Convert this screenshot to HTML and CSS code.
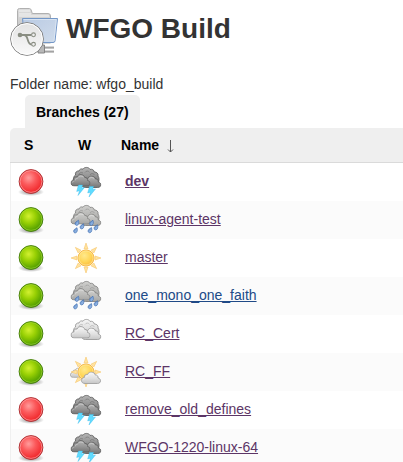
FILE: index.html
```html
<!DOCTYPE html>
<html lang="en">
<head>
<meta charset="utf-8">
<title>WFGO Build</title>
<link rel="stylesheet" href="styles.css">
</head>
<body>
<svg class="defs" aria-hidden="true">
  <defs>
    <radialGradient id="g-red" cx=".4" cy=".35" r=".65"><stop offset="0" stop-color="#ff9c9c"/><stop offset=".45" stop-color="#fb5a5c"/><stop offset="1" stop-color="#f02428"/></radialGradient>
    <radialGradient id="g-green" cx=".4" cy=".36" r=".65"><stop offset="0" stop-color="#d2f030"/><stop offset=".45" stop-color="#98d004"/><stop offset="1" stop-color="#4b9a00"/></radialGradient>
    <radialGradient id="g-shadow"><stop offset="0" stop-color="#000" stop-opacity=".5"/><stop offset="1" stop-color="#000" stop-opacity="0"/></radialGradient>
    <radialGradient id="g-sun" cx=".4" cy=".35" r=".65"><stop offset="0" stop-color="#ffe98c"/><stop offset=".6" stop-color="#ffd658"/><stop offset="1" stop-color="#fcbc3c"/></radialGradient>
    <linearGradient id="g-dark" x2="0" y2="1"><stop offset="0" stop-color="#b4b4b4"/><stop offset=".5" stop-color="#989898"/><stop offset="1" stop-color="#757575"/></linearGradient>
    <linearGradient id="g-mid" x2="0" y2="1"><stop offset="0" stop-color="#cfcfcd"/><stop offset=".5" stop-color="#bcbcba"/><stop offset="1" stop-color="#a6a6a4"/></linearGradient>
    <linearGradient id="g-light" x2="0" y2="1"><stop offset="0" stop-color="#f6f6f6"/><stop offset=".55" stop-color="#e0e0e0"/><stop offset="1" stop-color="#c6c6c6"/></linearGradient>
    <linearGradient id="g-blue" x2="1" y2="1"><stop offset="0" stop-color="#b9cae3"/><stop offset="1" stop-color="#d0dceb"/></linearGradient>
    <linearGradient id="g-paper" x2="0" y2="1"><stop offset="0" stop-color="#dcdcdc"/><stop offset="1" stop-color="#b4b4b4"/></linearGradient>
    <linearGradient id="g-disc" x2="0" y2="1"><stop offset="0" stop-color="#e2e2e2"/><stop offset="1" stop-color="#fafafa"/></linearGradient>
    <linearGradient id="g-drop" x2="1" y2="1"><stop offset="0" stop-color="#4f7fc4"/><stop offset="1" stop-color="#b5d1f2"/></linearGradient>

    <symbol id="puff" viewBox="0 0 20 12.5"><path d="M4 12C1.5 12 .5 10.500.5 9C.5 7 1.800 6 3.300 6C3 3.800 4.800 2.500 6.500 3C7.300 1 9 .5 10.500.6C12.500.7 14 2 14.300 3.500C16.200 3.300 17.400 4.800 17 6.500C18.800 6.800 19.500 8 19.500 9.300C19.500 11 18.200 12 16.500 12Z" stroke-width=".9"/><path d="M5 6.300C4.900 4.800 6 4.200 7.100 4.500M8.200 3.200C9 1.800 11.500 1.500 12.900 3.200M2 8.500C2.200 7.500 3 7.200 3.700 7.300" fill="none" stroke="#fff" stroke-opacity=".4" stroke-width=".8"/></symbol>
    <symbol id="cloud" viewBox="0 0 32 32">
      <path d="M3.500 16C3 13 3.500 10 5.500 9C4.800 6.500 6.800 4.600 9 5C9.500 3 11.500 2.500 13 3.200C14.200.8 18.800.8 20 3.400C22 2.800 24.300 4.200 24.300 6C26.700 5.800 28.600 7.800 28 10C29.500 12 29.200 15 28 17Z" stroke-width=".9"/>
      <path d="M9 8.500C9.500 6.500 11.500 6 13 7M15 6.500C16 4.500 18.500 4.700 19.500 6.300M20 9C21 7 23.500 7.200 24.500 9" fill="none" stroke-opacity=".45"/>
      <use href="#puff" x="11" y="9.500" width="20.500" height="12.500"/>
      <use href="#puff" x=".5" y="8" width="20" height="12.500"/>
    </symbol>
    <symbol id="rays" viewBox="0 0 32 32"><g fill="#ffe3a0" stroke="#f7c66c" stroke-width=".6"><path id="ray" d="M14 7L16 1L18 7Z"/><use href="#ray" transform="rotate(45 16 16)"/><use href="#ray" transform="rotate(90 16 16)"/><use href="#ray" transform="rotate(135 16 16)"/><use href="#ray" transform="rotate(180 16 16)"/><use href="#ray" transform="rotate(225 16 16)"/><use href="#ray" transform="rotate(270 16 16)"/><use href="#ray" transform="rotate(315 16 16)"/></g><circle cx="16" cy="16" r="8" fill="url(#g-sun)" stroke="#f4b23c" stroke-width=".9"/><circle cx="16" cy="16" r="7.100" fill="none" stroke="#ffeaa5" stroke-width=".7"/></symbol>
    <path id="drop" d="M1.400-2.800C2.200-1 2 2.200-.2 2.400C-2.400 2.400-2.200-.4-.8-1.200C0-1.700.8-2.200 1.400-2.800Z" fill="url(#g-drop)" stroke="#3f6fb2" stroke-width=".7"/>
    <path id="bolt" d="M1 0L5 0L4.200 3L7 2.400L.5 10.500L2 5.800L-.8 6.400Z" fill="#5fdcff" stroke="#38b8ea" stroke-width=".4"/>

    <symbol id="ball-red" viewBox="0 0 32 32"><ellipse cx="16" cy="26" rx="13" ry="4" fill="url(#g-shadow)"/><circle cx="16" cy="15.500" r="11.900" fill="url(#g-red)" stroke="#a52c30" stroke-width=".9"/><circle cx="16" cy="15.500" r="10.900" fill="none" stroke="#ffb4b4" stroke-opacity=".6"/></symbol>
    <symbol id="ball-green" viewBox="0 0 32 32"><ellipse cx="16" cy="26" rx="13" ry="4" fill="url(#g-shadow)"/><circle cx="16" cy="15.500" r="11.900" fill="url(#g-green)" stroke="#3f7809" stroke-width=".9"/><circle cx="16" cy="15.500" r="10.900" fill="none" stroke="#b4e04a" stroke-opacity=".5"/></symbol>
    <symbol id="storm" viewBox="0 0 32 32"><use href="#cloud" fill="url(#g-dark)" stroke="#626262"/><use href="#bolt" x="7.500" y="19"/><use href="#bolt" x="18.500" y="20.500"/></symbol>
    <symbol id="rain" viewBox="0 0 32 32"><use href="#cloud" fill="url(#g-mid)" stroke="#868684"/><use href="#drop" x="7" y="19"/><use href="#drop" x="12" y="22.500"/><use href="#drop" x="5.500" y="26.500"/><use href="#drop" x="21.500" y="19"/><use href="#drop" x="26" y="23.500"/><use href="#drop" x="20" y="26.300"/></symbol>
    <symbol id="cloudy" viewBox="0 0 32 32"><use href="#cloud" fill="url(#g-light)" stroke="#9a9a9a"/></symbol>
    <symbol id="sunny" viewBox="0 0 32 32"><use href="#rays"/></symbol>
    <symbol id="partly" viewBox="0 0 32 32"><g fill="url(#g-light)" stroke="#a0a0a0"><use href="#puff" x="0" y="11" width="16" height="11.500"/><use href="#rays"/><use href="#puff" x="11" y="15.500" width="20" height="12.500"/></g></symbol>
  </defs>
</svg>

<header class="title">
  <svg class="title-icon" viewBox="0 0 48 48" aria-hidden="true">
    <path d="M7.500 40V2.500Q7.500.5 9.500.5H19.500Q21 .5 21.500 3L22.300 5.500H38Q40.500 5.500 40.500 8V35H7.500Z" fill="url(#g-paper)" stroke="#b0b0b0"/>
    <path d="M9 3H20M9 6H21M9 8H39" stroke="#f4f4f4"/>
    <path d="M12.500 10.500H47.500L45 33Q44.800 34.500 43 34.500H15Z" fill="url(#g-blue)" stroke="#7397c8"/>
    <path d="M13.500 11.500H46.300L44 33" fill="none" stroke="#dfe8f4" stroke-opacity=".8"/>
    <path d="M34 39.500H44M34 43.500H44" stroke="#8b8b8b" stroke-width="2"/>
    <path d="M34 38.800H44M34 42.800H44" stroke="#ddd"/>
    <path d="M29 37H34.500V45H28Z" fill="#b8b8b8" stroke="#858585"/>
    <circle cx="17" cy="31" r="16.400" fill="url(#g-disc)" stroke="#747474" stroke-width=".9"/>
    <circle cx="17" cy="31" r="15.400" fill="none" stroke="#fff"/>
    <path d="M10 27H21.500M14 27C19 27 16.500 36.500 21.500 36.500" fill="none" stroke="#898d82" stroke-width="1.800"/>
    <circle cx="10" cy="27" r="2.300" fill="#898d82"/>
    <circle cx="23.500" cy="26.800" r="1.900" fill="#efefef" stroke="#898d82" stroke-width="1.100"/>
    <circle cx="23.500" cy="36.300" r="1.900" fill="#efefef" stroke="#898d82" stroke-width="1.100"/>
  </svg>
  <h1>WFGO Build</h1>
</header>
<main>
  <p class="folder">Folder name: wfgo_build</p>
  <nav class="tabs"><a class="tab" href="#branches">Branches (27)</a></nav>
  <table class="branches" id="branches">
    <thead>
      <tr><th class="status" scope="col">S</th><th class="weather" scope="col">W</th><th class="name" scope="col"><span class="sort">Name <svg class="arrow" viewBox="0 0 8 16" aria-hidden="true"><path d="M4.500 3V15M2 12.500L4.500 15L7 12.500" fill="none" stroke="#555"/></svg></span></th></tr>
    </thead>
    <tbody>
      <tr><td><svg class="icon"><use href="#ball-red"/></svg></td><td><svg class="icon"><use href="#storm"/></svg></td><td><a class="current" href="#dev">dev</a></td></tr>
      <tr><td><svg class="icon"><use href="#ball-green"/></svg></td><td><svg class="icon"><use href="#rain"/></svg></td><td><a href="#linux-agent-test">linux-agent-test</a></td></tr>
      <tr><td><svg class="icon"><use href="#ball-green"/></svg></td><td><svg class="icon"><use href="#sunny"/></svg></td><td><a href="#master">master</a></td></tr>
      <tr><td><svg class="icon"><use href="#ball-green"/></svg></td><td><svg class="icon"><use href="#rain"/></svg></td><td><a class="unvisited" href="#one_mono_one_faith">one_mono_one_faith</a></td></tr>
      <tr><td><svg class="icon"><use href="#ball-green"/></svg></td><td><svg class="icon"><use href="#cloudy"/></svg></td><td><a href="#RC_Cert">RC_Cert</a></td></tr>
      <tr><td><svg class="icon"><use href="#ball-green"/></svg></td><td><svg class="icon"><use href="#partly"/></svg></td><td><a href="#RC_FF">RC_FF</a></td></tr>
      <tr><td><svg class="icon"><use href="#ball-red"/></svg></td><td><svg class="icon"><use href="#storm"/></svg></td><td><a href="#remove_old_defines">remove_old_defines</a></td></tr>
      <tr><td><svg class="icon"><use href="#ball-red"/></svg></td><td><svg class="icon"><use href="#storm"/></svg></td><td><a href="#WFGO-1220-linux-64">WFGO-1220-linux-64</a></td></tr>
    </tbody>
  </table>
</main>
</body>
</html>
```
FILE: styles.css
```css
* {
  box-sizing: border-box;
}

body {
  margin: 0;
  height: 100vh;
  padding: 8px 0 0 10px;
  overflow: hidden;
  background: #fff;
  color: #333;
  font: 14px/20px "Liberation Sans", Arial, sans-serif;
}

.defs {
  position: absolute;
  width: 0;
  height: 0;
}

.title {
  display: flex;
  gap: 8px;
  height: 48px;
}

.title-icon {
  width: 48px;
  height: 48px;
}

h1 {
  margin: 4px 0 0;
  font-size: 28px;
  line-height: 34px;
}

.folder {
  margin: 18px 0 0;
}

.tabs {
  display: flex;
  padding: 1px 15px 0;
}

.tab {
  padding: 7px 11px 6px;
  border-radius: 5px 5px 0 0;
  background: #efefef;
  color: #000;
  font-weight: bold;
  text-decoration: none;
}

.branches {
  width: 100%;
  border-collapse: separate;
  border-spacing: 0;
  table-layout: fixed;
}

th {
  height: 35px;
  padding: 0;
  border-bottom: 1px solid #dadada;
  background: #efefef;
  color: #000;
  text-align: left;
}

.status {
  width: 55px;
  padding-left: 14px;
  border-top-left-radius: 5px;
}

.weather {
  width: 52px;
  padding-left: 13px;
}

.name {
  padding-left: 4px;
}

.sort {
  display: flex;
  align-items: center;
  gap: 7px;
}

.arrow {
  width: 8px;
  height: 16px;
}

td {
  height: 38px;
  padding: 0 8px 2px;
}

td:first-child {
  padding: 0 4px 1px;
  border-left: 1px solid #f0f0f0;
}

td:nth-child(2) {
  padding: 0 5px 1px;
}

tbody tr:nth-child(even) {
  background: #fbfbfb;
}

.icon {
  display: block;
  width: 32px;
  height: 32px;
}

td a {
  color: #5c3566;
}

td a.unvisited {
  color: #204a87;
}

.current {
  font-weight: bold;
}
```
